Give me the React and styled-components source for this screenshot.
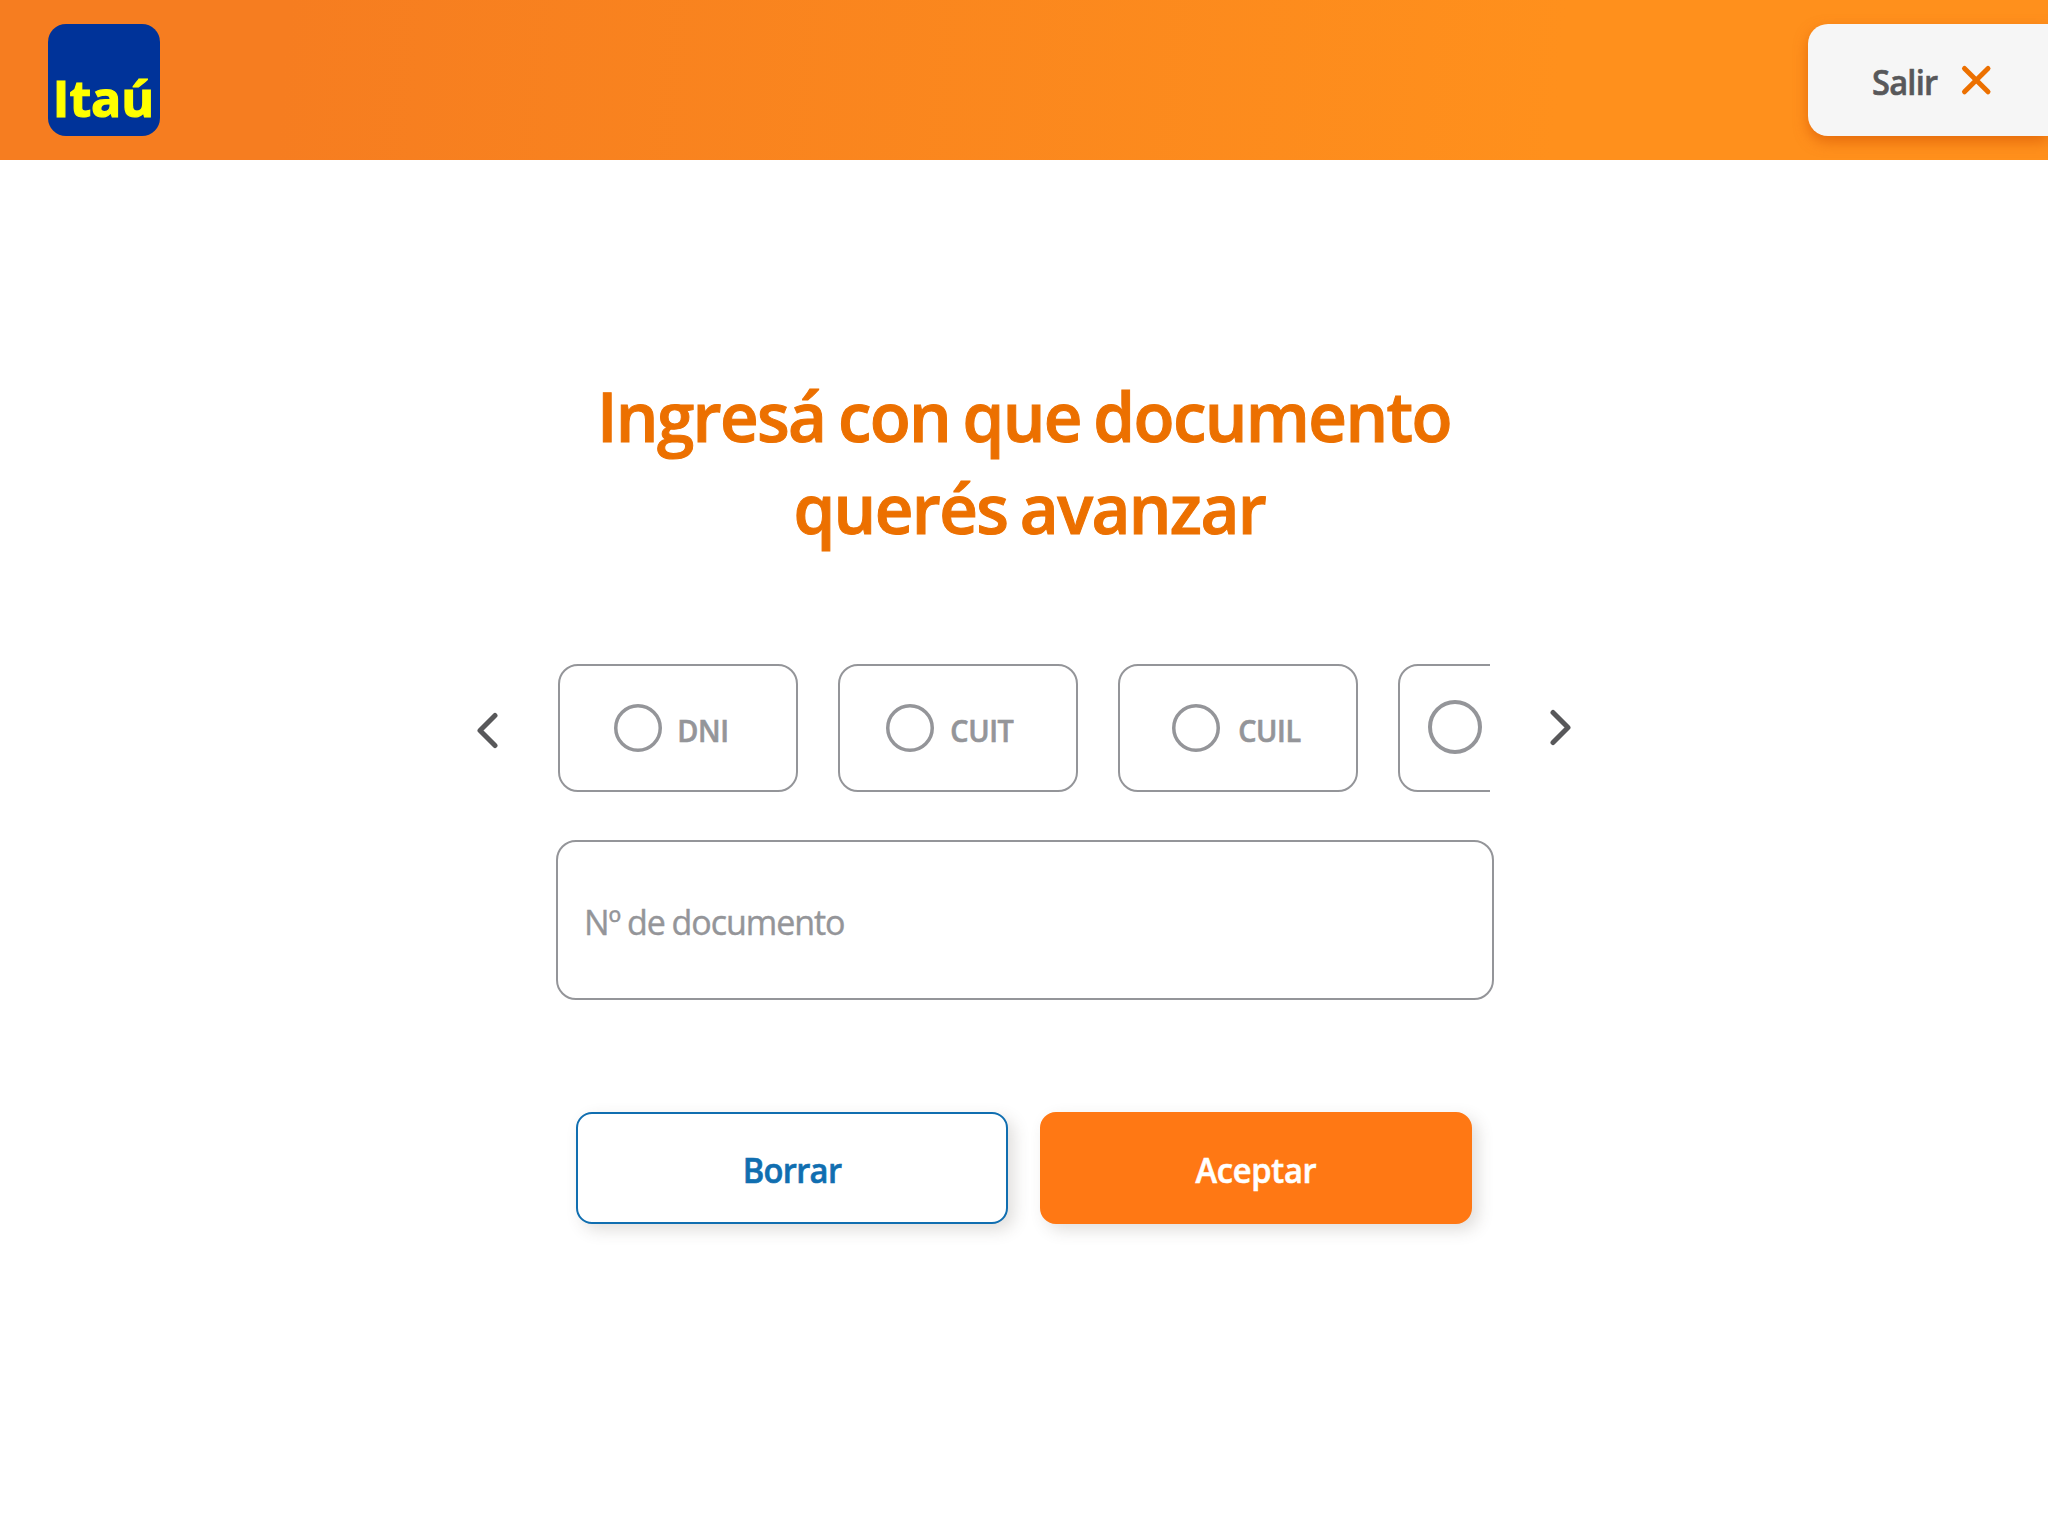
import React, { Component } from "react";
import styled, { createGlobalStyle, ThemeProvider } from "styled-components";

const theme = {
  orange: "#ec7000",
  button: "#ff7814",
  blue: "#106eb0",
  grey: "#949599",
  dark: "#58585a"
};

const GlobalStyle = createGlobalStyle`
  * {
    box-sizing: border-box;
  }

  body {
    margin: 0;
    background-color: white;
    font-family: "Open Sans", "Noto Sans", sans-serif;
  }
`;

const Page = styled.div`
  width: 2048px;
  height: 1536px;
  overflow: hidden;
`;

const Header = styled.header`
  display: flex;
  align-items: center;
  justify-content: space-between;
  height: 160px;
  padding-left: 48px;
  overflow: hidden;
  background: linear-gradient(95deg, #f67d20 14%, #ff901c 76%);

  svg {
    overflow: visible;
  }
`;

// narrows the typeface horizontally
const Label = styled.span`
  display: block;
  transform: scaleX(${props => props.$scale || 0.96});
  transform-origin: ${props => props.$origin || "center"};
  white-space: nowrap;
  -webkit-text-stroke: ${props => props.$stroke || 0.6}px currentColor;
`;

const Exit = styled.button`
  display: flex;
  align-items: flex-start;
  width: 240px;
  height: 112px;
  padding: 33px 0 0 64px;
  border: none;
  border-radius: 20px 0 0 20px;
  background-color: #f6f6f6;
  box-shadow: 0 6px 14px rgba(210, 80, 0, 0.55);
  color: ${props => props.theme.dark};
  font: 600 34px/50px "Open Sans", sans-serif;
  letter-spacing: -0.8px;
  text-align: left;

  ${Label} {
    width: 87px;
  }

  svg {
    margin-top: 6px;
  }
`;

const Main = styled.main`
  display: flex;
  flex-direction: column;
  align-items: center;
  padding-top: 209px;
`;

const Title = styled.h1`
  margin: 0;
  color: ${props => props.theme.orange};
  font-size: 69px;
  font-weight: 600;
  line-height: 92px;
  letter-spacing: -1.7px;
  word-spacing: -3.5px;
  text-align: center;

  ${Label} + ${Label} {
    padding-left: 11px;
  }
`;

const Carousel = styled.div`
  display: flex;
  width: 1096px;
  margin-top: 111px;
`;

const Arrow = styled.button`
  width: 22px;
  height: 37px;
  margin-top: ${props => props.$top}px;
  padding: 0;
  border: none;
  background: none;

  svg {
    display: block;
  }
`;

const Options = styled.div`
  display: flex;
  gap: 40px;
  width: 932px;
  margin: 0 60px 0 60px;
  overflow: hidden;
`;

const Option = styled.label`
  display: flex;
  flex: none;
  align-items: flex-start;
  width: 240px;
  height: 128px;
  padding-top: ${props => (props.$large ? 34 : 38)}px;
  padding-left: ${props => props.$indent}px;
  border: 2px solid ${props => props.theme.grey};
  border-radius: 20px;
  color: ${props => props.theme.grey};
  font-size: 30px;
  font-weight: 600;
  line-height: 40px;
  letter-spacing: -0.4px;

  ${Label} {
    padding: 7px 0 0 ${props => props.$gap || 17}px;
  }
`;

const DocumentInput = styled.input`
  width: 938px;
  height: 160px;
  margin: 48px 0 0 2px;
  padding: 4px 26px 0 26px;
  border: 2px solid ${props => props.theme.grey};
  border-radius: 20px;
  outline: none;
  background: none;
  font: 400 34px/50px "Open Sans", sans-serif;
  letter-spacing: -1.05px;
  word-spacing: -1px;

  &::placeholder {
    color: ${props => props.theme.grey};
    opacity: 1;
    -webkit-text-stroke: 0.4px currentColor;
  }
`;

const Actions = styled.div`
  display: flex;
  gap: 32px;
  margin-top: 112px;
`;

const Button = styled.button`
  width: 432px;
  height: 112px;
  padding: 4px 0 0;
  border: 2px solid ${props => (props.$primary ? props.theme.button : props.theme.blue)};
  border-radius: 16px;
  background-color: ${props => (props.$primary ? props.theme.button : "white")};
  box-shadow: 6px 6px 16px rgba(70, 60, 50, 0.17);
  color: ${props => (props.$primary ? "white" : props.theme.blue)};
  font: 600 34px/50px "Open Sans", sans-serif;
  letter-spacing: ${props => (props.$primary ? -0.3 : -0.7)}px;
`;

const Logo = () => (
  <svg width="112" height="112" viewBox="0 0 112 112">
    <rect width="112" height="112" rx="18" fill="#003399" />
    <text
      x="4.800"
      y="92.900"
      textLength="101.500"
      lengthAdjust="spacingAndGlyphs"
      fill="#ffff00"
      stroke="#ffff00"
      strokeWidth="1.200"
      fontFamily="Open Sans"
      fontSize="51"
      fontWeight="700"
    >
      Itaú
    </text>
  </svg>
);

const Radio = ({ size, stroke }) => (
  <svg width={size} height={size} viewBox={`0 0 ${size} ${size}`} fill="none">
    <circle
      cx={size / 2}
      cy={size / 2}
      r={(size - stroke) / 2}
      stroke={theme.grey}
      strokeWidth={stroke}
    />
  </svg>
);

const Chevron = ({ points }) => (
  <svg width="22" height="37" viewBox="0 0 22 37" fill="none">
    <polyline
      points={points}
      stroke={theme.dark}
      strokeWidth="5"
      strokeLinecap="round"
      strokeLinejoin="round"
    />
  </svg>
);

class App extends Component {
  constructor(props) {
    super(props);
    this.state = {
      options: [
        { name: "DNI", indent: 54, gap: 16 },
        { name: "CUIT", indent: 46 },
        { name: "CUIL", indent: 52, gap: 19 },
        { name: "", indent: 28, large: true }
      ]
    };
  }

  render() {
    return (
      <ThemeProvider theme={theme}>
        <GlobalStyle />
        <Page>
          <Header>
            <Logo />
            <Exit>
              <Label $origin="left">Salir</Label>
              <svg width="34" height="34" viewBox="0 0 34 34">
                <path
                  d="M5.500 5.500L29 28.800M29 5.500L5.500 28.800"
                  stroke={theme.orange}
                  strokeWidth="5"
                  strokeLinecap="round"
                />
              </svg>
            </Exit>
          </Header>
          <Main>
            <Title>
              <Label $scale={0.975} $stroke={1}>Ingresá con que documento</Label>
              <Label $scale={0.975} $stroke={1}>querés avanzar</Label>
            </Title>
            <Carousel>
              <Arrow $top={48}>
                <Chevron points="19,3.500 4,18.500 19,33.500" />
              </Arrow>
              <Options>
                {this.state.options.map((option, index) => (
                  <Option
                    key={index}
                    $indent={option.indent}
                    $gap={option.gap}
                    $large={option.large}
                  >
                    <Radio size={option.large ? 54 : 48} stroke={option.large ? 4 : 3.5} />
                    <Label $origin="left">{option.name}</Label>
                  </Option>
                ))}
              </Options>
              <Arrow $top={45}>
                <Chevron points="3,3.500 18,18.500 3,33.500" />
              </Arrow>
            </Carousel>
            <DocumentInput placeholder="Nº de documento" />
            <Actions>
              <Button>
                <Label>Borrar</Label>
              </Button>
              <Button $primary>
                <Label>Aceptar</Label>
              </Button>
            </Actions>
          </Main>
        </Page>
      </ThemeProvider>
    );
  }
}

export default App;
